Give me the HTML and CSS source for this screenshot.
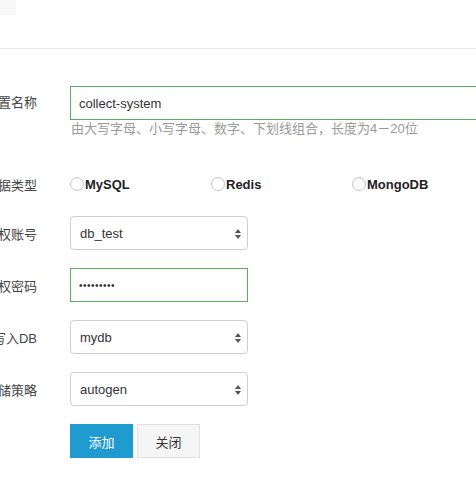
FILE: index.html
```html
<!DOCTYPE html>
<html lang="zh-CN">
<head>
<meta charset="utf-8">
<title>添加配置</title>
<link rel="stylesheet" href="styles.css">
</head>
<body>
<div class="header"><div class="corner"></div></div>
<form class="form">
  <div class="row row-first">
    <label class="label">配置名称</label>
    <div class="field">
      <input class="text-input ok" type="text" value="collect-system" readonly>
      <div class="help">由大写字母、小写字母、数字、下划线组合，长度为4－20位</div>
    </div>
  </div>
  <div class="row row-radio">
    <label class="label">数据类型</label>
    <div class="radios">
      <label class="radio"><span class="circle"></span>MySQL</label>
      <label class="radio"><span class="circle"></span>Redis</label>
      <label class="radio"><span class="circle"></span>MongoDB</label>
    </div>
  </div>
  <div class="row">
    <label class="label">授权账号</label>
    <div class="select">
      <span class="select-value">db_test</span>
      <svg class="arrows" width="8" height="12" viewBox="0 0 8 12"><path d="M4 1 L7 5 L1 5 Z M1 7 L7 7 L4 11 Z" fill="#555"/></svg>
    </div>
  </div>
  <div class="row">
    <label class="label">授权密码</label>
    <div class="pwd ok"><span class="dots">•••••••••</span></div>
  </div>
  <div class="row">
    <label class="label">写入DB</label>
    <div class="select">
      <span class="select-value">mydb</span>
      <svg class="arrows" width="8" height="12" viewBox="0 0 8 12"><path d="M4 1 L7 5 L1 5 Z M1 7 L7 7 L4 11 Z" fill="#555"/></svg>
    </div>
  </div>
  <div class="row">
    <label class="label">存储策略</label>
    <div class="select">
      <span class="select-value">autogen</span>
      <svg class="arrows" width="8" height="12" viewBox="0 0 8 12"><path d="M4 1 L7 5 L1 5 Z M1 7 L7 7 L4 11 Z" fill="#555"/></svg>
    </div>
  </div>
  <div class="row">
    <span class="label"></span>
    <div class="buttons">
      <button type="button" class="btn btn-primary">添加</button>
      <button type="button" class="btn btn-default">关闭</button>
    </div>
  </div>
</form>
</body>
</html>
```
FILE: styles.css
```css
html, body {
  margin: 0;
  padding: 0;
  overflow: hidden;
  background: #fff;
}
body {
  font-family: "Liberation Sans", "Noto Sans CJK SC", sans-serif;
  font-size: 13px;
  color: #333;
  width: 476px;
  height: 477px;
}
.header {
  height: 48px;
  border-bottom: 1px solid #e6e6e6;
}
.corner {
  width: 16px;
  height: 15px;
  background: #f8f8f8;
}
.form {
  padding-top: 37px;
  margin: 0;
}
.row {
  display: flex;
  align-items: center;
  margin-bottom: 18px;
}
.row-first {
  align-items: flex-start;
}
.row-first .label {
  line-height: 34px;
}
.row-radio {
  margin-top: 32px;
  height: 28px;
}
.label {
  flex: none;
  width: 60px;
  margin-left: -23px;
  margin-right: 33px;
  text-align: right;
  white-space: nowrap;
  color: #444;
  font-size: 13px;
}
.field {
  display: flex;
  flex-direction: column;
}
.text-input {
  box-sizing: border-box;
  width: 430px;
  height: 34px;
  padding: 0 8px;
  font-family: inherit;
  font-size: 13px;
  color: #333;
  background: #fff;
  border: 1px solid #5cae5f;
  border-radius: 0;
  outline: none;
}
.help {
  line-height: 18px;
  color: #999;
  font-size: 13px;
  padding-left: 1px;
}
.radios {
  display: flex;
}
.radio {
  width: 141px;
  display: flex;
  align-items: center;
  font-weight: bold;
  font-size: 13px;
  color: #222;
}
.circle {
  box-sizing: border-box;
  width: 14px;
  height: 14px;
  border: 1px solid #c8c8c8;
  border-radius: 50%;
  margin-right: 1px;
  background: #fff;
  box-shadow: inset 0 1px 1px rgba(0,0,0,0.06);
}
.select {
  position: relative;
  box-sizing: border-box;
  width: 178px;
  height: 34px;
  border: 1px solid #cfcfcf;
  border-radius: 4px;
  background: #fff;
  display: flex;
  align-items: center;
  padding-left: 9px;
}
.select-value {
  font-size: 13px;
  color: #333;
}
.arrows {
  position: absolute;
  right: 5px;
  top: 11px;
}
.pwd {
  box-sizing: border-box;
  width: 178px;
  height: 34px;
  border: 1px solid #5cae5f;
  display: flex;
  align-items: center;
  padding-left: 8px;
}
.dots {
  font-size: 10px;
  letter-spacing: 0.5px;
  color: #333;
}
.buttons {
  display: flex;
  gap: 4px;
}
.btn {
  box-sizing: border-box;
  height: 34px;
  width: 63px;
  font-family: inherit;
  font-size: 13px;
  border-radius: 0;
  padding: 0;
  cursor: pointer;
}
.btn-primary {
  background: #1f9bcf;
  border: 1px solid #1f9bcf;
  color: #fff;
}
.btn-default {
  background: #f5f5f5;
  border: 1px solid #e1e1e1;
  color: #333;
}
```
